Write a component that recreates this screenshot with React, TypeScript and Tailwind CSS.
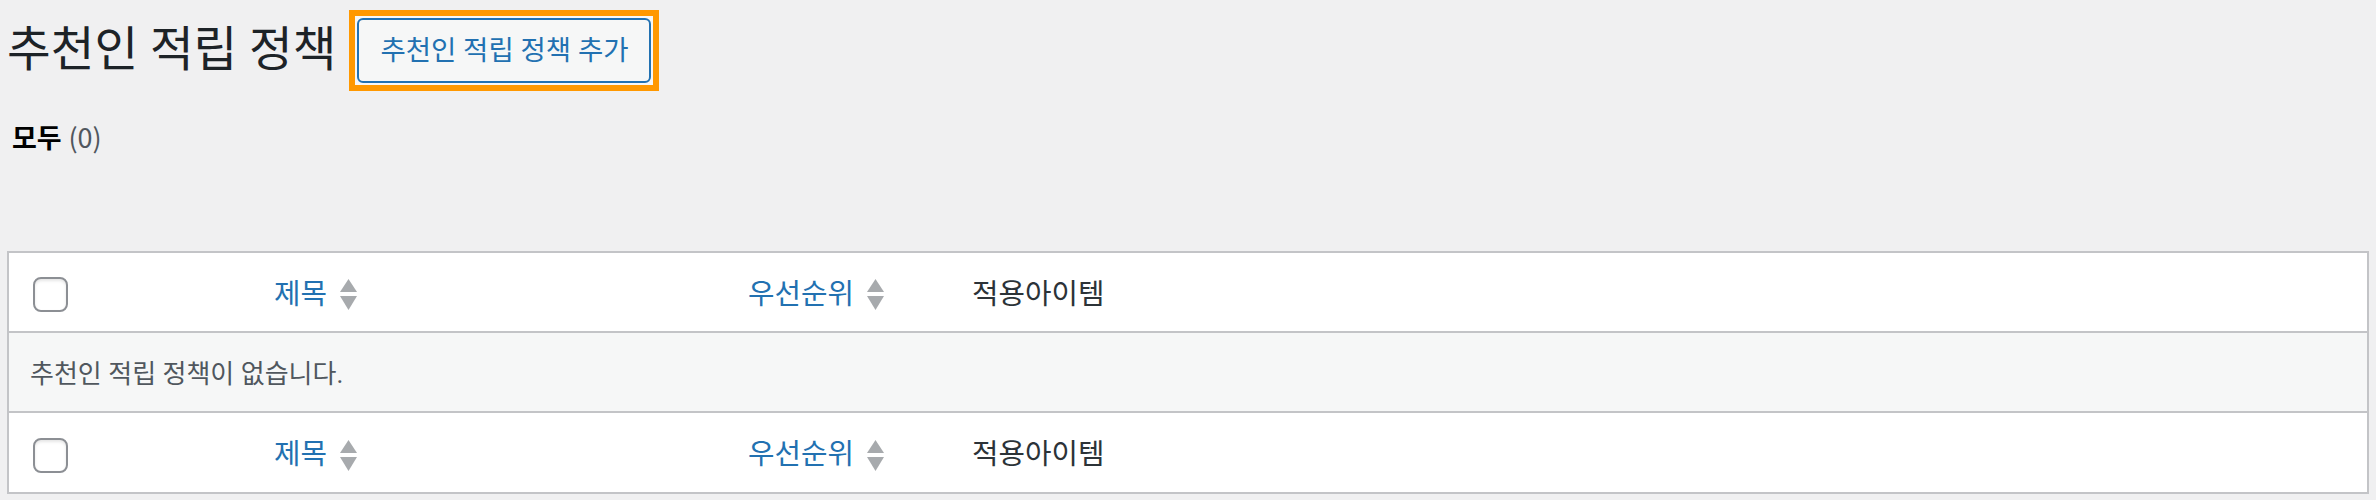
const linkCls = 'text-[#2271b1]';

function SortArrows() {
  return (
    <svg width="17" height="31" viewBox="0 0 17 31" className="ml-[13px] shrink-0">
      <polygon points="8.5,0 17,13 0,13" fill="#a7aaad" />
      <polygon points="0,17 17,17 8.5,31" fill="#a7aaad" />
    </svg>
  );
}

function Checkbox() {
  return (
    <span className="ml-[24px] block h-[35px] w-[35px] rounded-[8px] border-2 border-[#8c8f94] bg-white shadow-[inset_0_2px_3px_rgba(0,0,0,0.1)]" />
  );
}

function HeadRow({ border }: { border: 'b' | 't' }) {
  return (
    <div
      className={
        'flex items-center pt-[5px] text-[28.8px] ' +
        (border === 'b' ? 'h-[80px] border-b-2 border-[#c3c4c7]' : 'h-[79px]')
      }
    >
      <div className="flex w-[251px] shrink-0 items-center">
        <Checkbox />
      </div>
      <div className="flex w-[474px] shrink-0 items-center pl-[14px]">
        <span className={linkCls}>제목</span>
        <SortArrows />
      </div>
      <div className="flex w-[224px] shrink-0 items-center pl-[14px]">
        <span className={linkCls}>우선순위</span>
        <SortArrows />
      </div>
      <div className="flex-1 pl-[14px] text-[#2c3338]">적용아이템</div>
    </div>
  );
}

export default function App() {
  return (
    <div className="min-h-[500px] bg-[#f0f0f1] px-[7px] pt-[10px] font-['Roboto','Noto_Sans_CJK_KR',sans-serif]">
      {/* page title + add button */}
      <div className="flex h-[81px] items-center">
        <h1 className="text-[47.5px] leading-none font-normal text-[#1d2327]">추천인 적립 정책</h1>
        <span className="ml-[13px] block border-[6px] border-[#ff9800] bg-[#f6f7f7] p-[2px]">
          <button className="flex h-[65px] w-[294px] items-center justify-center rounded-[6px] border-2 border-[#2271b1] bg-[#f6f7f7] text-[27.5px] text-[#2271b1]">
            추천인 적립 정책 추가
          </button>
        </span>
      </div>

      {/* views */}
      <div className="ml-[5px] mt-[28px] h-[36px] text-[27px] leading-[36px] text-[#50575e]">
        <span className="font-bold text-black">모두</span>{' '}
        <span className="font-['Noto_Sans_CJK_KR',sans-serif]">(0)</span>
      </div>

      {/* list table */}
      <div className="mt-[96px] border-2 border-[#c3c4c7] bg-white">
        <HeadRow border="b" />
        <div className="flex h-[80px] items-center border-b-2 border-[#c3c4c7] bg-[#f6f7f7] pt-[5px] pl-[21px] text-[26px] text-[#50575e]">
          추천인 적립 정책이 없습니다.
        </div>
        <HeadRow border="t" />
      </div>
    </div>
  );
}
